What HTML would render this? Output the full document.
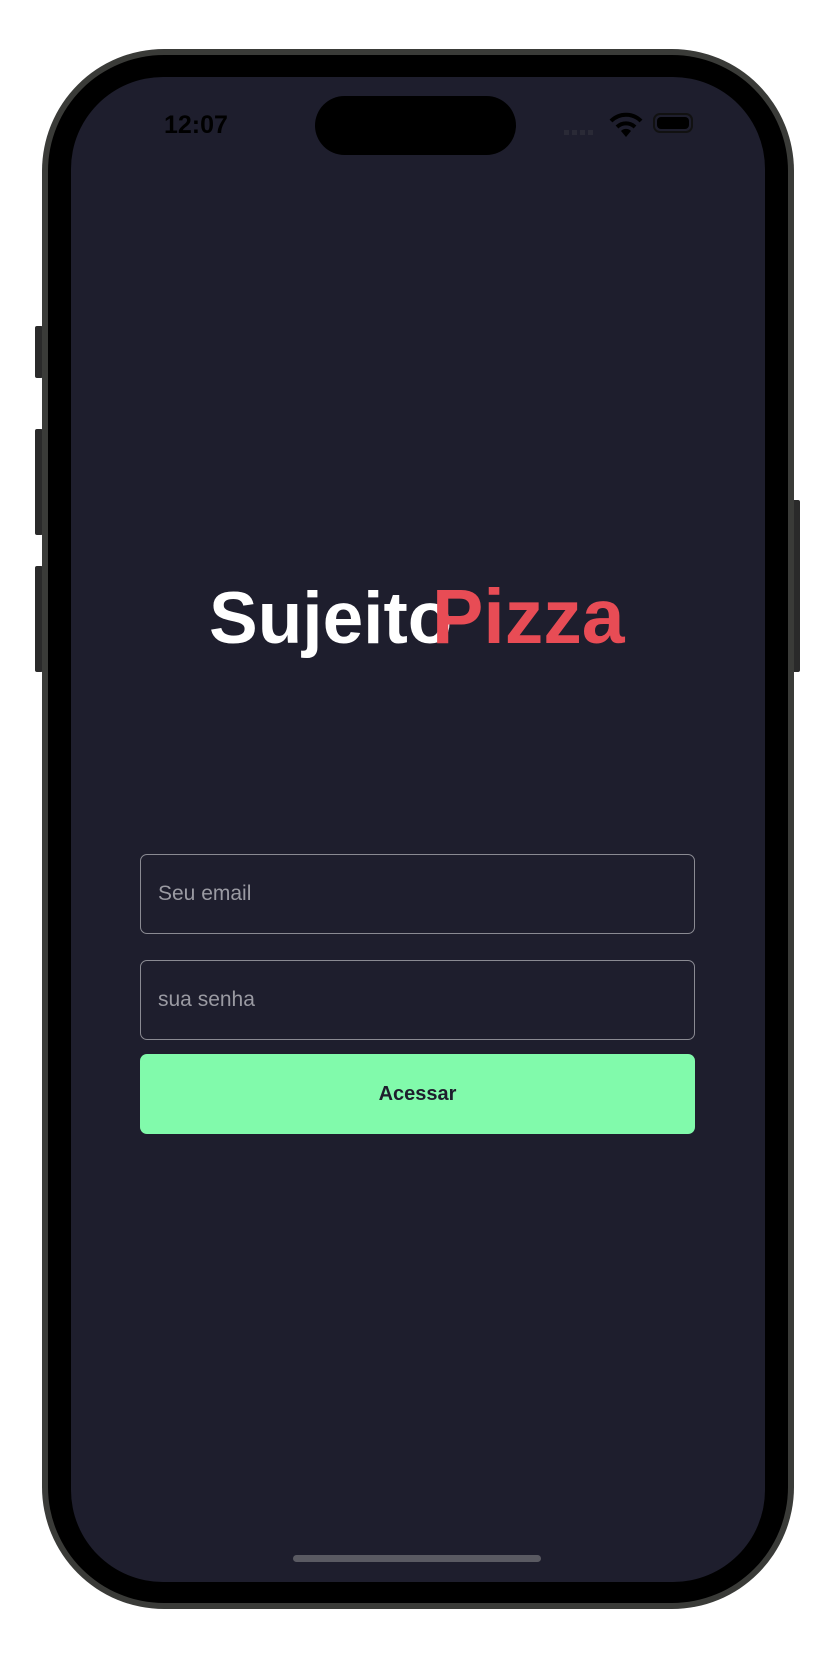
<!DOCTYPE html>
<html><head><meta charset="utf-8"><style>
html,body{margin:0;padding:0;background:#fff;width:830px;height:1668px;overflow:hidden;font-family:"Liberation Sans",sans-serif}
.btn{position:absolute;background:#2a2a2a;border-radius:2px}
.frame{position:absolute;left:42px;top:49px;width:752px;height:1560px;border-radius:122px;background:#3a3b38;}
.bezel{position:absolute;left:48px;top:55px;width:740px;height:1548px;border-radius:116px;background:#000}
.screen{position:absolute;left:71px;top:77px;width:694px;height:1505px;border-radius:92px;background:#1e1e2d;overflow:hidden}
.island{position:absolute;left:244px;top:19px;width:201px;height:59px;border-radius:30px;background:#000}
.time{position:absolute;left:93px;top:34px;font-size:25px;font-weight:bold;color:#000}
.logo{position:absolute;font-weight:bold;line-height:1}
.inp{position:absolute;left:69px;width:555px;height:80px;border:1.5px solid #8a8a92;border-radius:7px;box-sizing:border-box;color:#9a9aa2;font-size:21px;padding-left:17px;line-height:78px}
.go{position:absolute;left:69px;top:977px;width:555px;height:80px;border-radius:7px;background:#81faab;color:#1e1e2d;font-weight:bold;font-size:20px;text-align:center;line-height:80px}
.home{position:absolute;left:222px;top:1478px;width:248px;height:7px;border-radius:4px;background:#5a5a62}
</style></head><body>
<div class="btn" style="left:35px;top:326px;width:8px;height:52px"></div>
<div class="btn" style="left:35px;top:429px;width:8px;height:106px"></div>
<div class="btn" style="left:35px;top:566px;width:8px;height:106px"></div>
<div class="btn" style="left:792px;top:500px;width:8px;height:172px"></div>
<div class="frame"></div>
<div class="bezel"></div>
<div class="screen">
  <div class="island"></div>
  <div class="time">12:07</div>
  <div style="position:absolute;left:493px;top:53px;width:30px;height:5px;background:repeating-linear-gradient(90deg,#2a2a36 0 5px,transparent 5px 8px)"></div>
  <svg style="position:absolute;left:538px;top:35px" width="34" height="26" viewBox="0 0 34 26"><path d="M2 9 A21 21 0 0 1 32 9" stroke="#000" stroke-width="4" fill="none"/><path d="M8 15 A13 13 0 0 1 26 15" stroke="#000" stroke-width="4" fill="none"/><path d="M12 19 L17 25 L22 19 A7 7 0 0 0 12 19Z" fill="#000"/></svg>
  <div style="position:absolute;left:582px;top:36px;width:40px;height:20px;border:2px solid #111;border-radius:7px;box-sizing:border-box;padding:2px"><div style="width:100%;height:100%;background:#000;border-radius:4px"></div></div>
  <div class="logo" style="left:138px;top:505px;font-size:73px;color:#fff">Sujeito</div>
  <div class="logo" style="left:361px;top:502px;font-size:77px;color:#e84c55">Pizza</div>
  <div class="inp" style="top:777px">Seu email</div>
  <div class="inp" style="top:883px">sua senha</div>
  <div class="go">Acessar</div>
  <div class="home"></div>
</div>
</body></html>
